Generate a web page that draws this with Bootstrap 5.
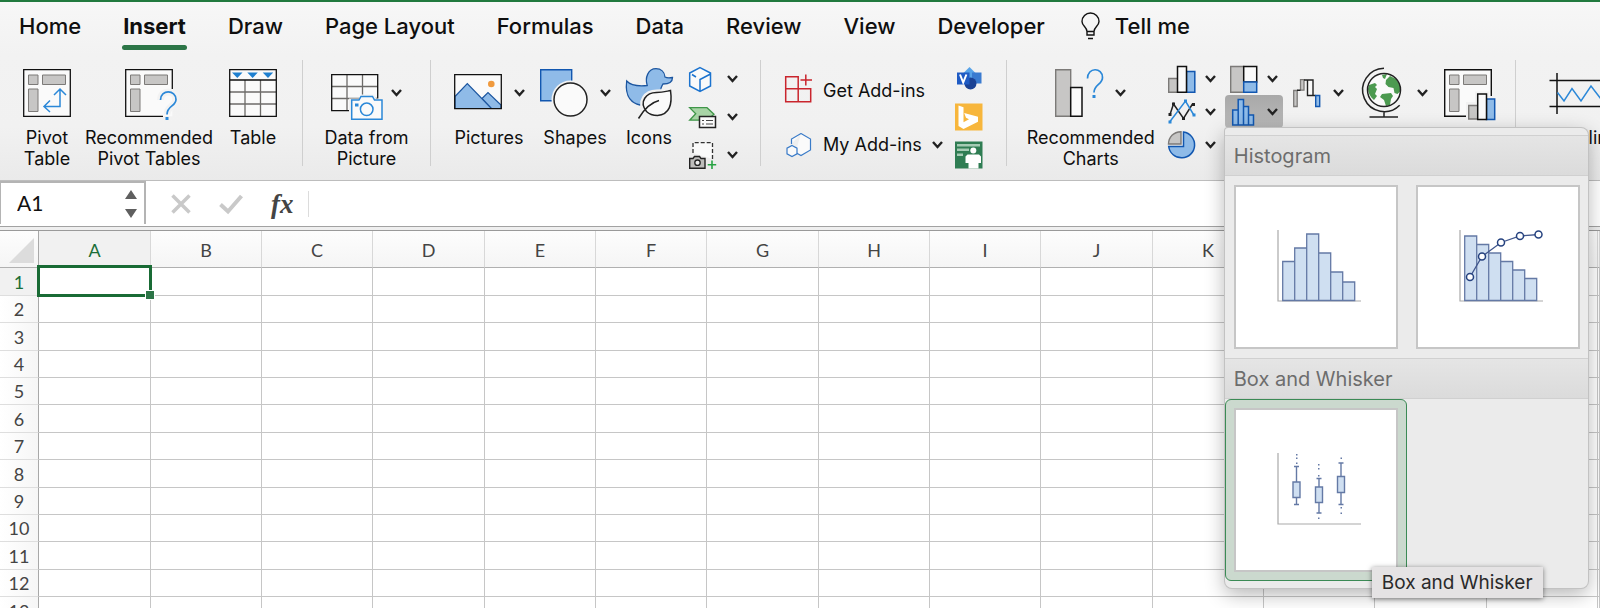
<!DOCTYPE html>
<html lang="en">
<head>
<meta charset="utf-8">
<meta name="viewport" content="width=device-width, initial-scale=1">
<title>Workbook</title>
<link href="https://cdn.jsdelivr.net/npm/bootstrap@5.3.0/dist/css/bootstrap.min.css" rel="stylesheet">
<style>
  :root { --green: #2c7547; --ink: #0f0f0f; }
  body { font-family: Inter, "Liberation Sans", sans-serif; color: var(--ink); background: #fff; }
  button, .plain { border: 0; background: none; padding: 0; color: inherit; }
  svg { overflow: visible; flex: none; display: block; fill: none; }

  .ribbon { border-top: 2px solid #217a3f; border-bottom: 1px solid #bdbdbd; background: linear-gradient(#f7f7f7, #f2f2f2 30%, #f1f1f1 70%, #eaeaea); padding-bottom: 14px; }
  .tabs { height: 58px; padding-left: 19px; gap: 42px; font-size: 22px; line-height: 24px; font-weight: 500; }
  .tabs a { color: inherit; text-decoration: none; padding: 12px 0 6px; white-space: nowrap; }
  .tabs a.active { font-weight: 700; position: relative; }
  .tabs a.active::after { content: ""; position: absolute; left: -1px; right: -1px; top: 43px; height: 5px; border-radius: 3px; background: var(--green); }
  .tabs .tell { margin-left: -6px; gap: 15px; }

  .tools { height: 106px; }
  .tool-group { border-right: 1px solid #cfcfcf; flex: none; gap: 10px; }
  .tool { font-size: 18px; line-height: 21px; flex: none; display: flex; flex-direction: column; align-items: center; align-self: flex-start; white-space: nowrap; }
  .tool .pic { height: 66px; display: flex; align-items: center; gap: 12px; margin-bottom: 1px; }
  .w-small { width: 54px; } .w-medium { width: 76px; } .w-large { width: 130px; }
  .mini { display: flex; align-items: center; justify-content: space-between; height: 33px; width: 58px; padding: 0 5px; }
  .mini.on { background: linear-gradient(#a9a9a9, #b9b9b9); border-radius: 4px; }
  .stack3 { width: 49px; }
  .stack3 button { height: 38px; display: flex; align-items: center; justify-content: space-between; width: 100%; }
  .addin { font-size: 18px; line-height: 20px; height: 54px; display: flex; align-items: center; gap: 10px; white-space: nowrap; }
  .app { height: 38px; display: flex; align-items: center; }
  .chev { stroke: #222; stroke-width: 2.4; }

  .chart-menu.dropdown-menu { display: block; top: 100%; left: 0; width: 363px; min-width: 0; padding: 7px 0; margin: 0; border: 0; border-radius: 3px 7px 7px 7px; background: #ebebeb; box-shadow: 0 0 0 1px #c2c2c2, 0 6px 20px rgba(0,0,0,.3); }
  .chart-menu h6 { font-size: 20px; line-height: 24px; font-weight: 400; color: #6d6d6d; margin: 0; padding: 8px 9px; height: 41px; border-top: 1px solid #d0d0d0; border-bottom: 1px solid #d0d0d0; background: linear-gradient(#e5e5e5, #dbdbdb); }
  .choice { padding: 8px; border: 1px solid transparent; border-radius: 6px; }
  .choice.on { background: #cbd9ce; border-color: #3b8a55; }
  .choice svg { background: #fff; outline: 2px solid #c6c6c6; outline-offset: -2px; }
  .tip { position: absolute; left: 147px; top: 439px; padding: 4px 10px; font-size: 19px; line-height: 23px; color: #2a2a2a; background: #e5e3e4; box-shadow: 0 1px 5px rgba(0,0,0,.5); white-space: nowrap; }

  .formula { height: 45px; font-family: Lato, "Liberation Sans", sans-serif; }
  .namebox { width: 146px; height: 43px; border: 2px solid #b4b4b4; border-bottom: 0; border-left-width: 1px; padding: 0 7px 0 16px; }
  .namebox input { width: 90px; font-size: 21px; line-height: 24px; border: 0; padding: 0 0 2px; background: none; color: #111; }
  .rule { height: 5px; border-top: 1px solid #a2a2a2; border-bottom: 1px solid #9a9a9a; background: #efefef; }
  .fx { font: italic 700 27px/30px "Liberation Serif", serif; color: #444; }
  .split { width: 1px; height: 26px; background: #dcdcdc; }

  .grid { table-layout: fixed; width: 100%; border-collapse: separate; border-spacing: 0; font-family: Lato, "Liberation Sans", sans-serif; font-size: 18px; line-height: 20px; color: #444; }
  .grid th { font-weight: 400; text-align: center; padding: 0; }
  .grid td { padding: 0; border-right: 1px solid #c6c6c6; border-bottom: 1px solid #c6c6c6; position: relative; }
  .grid thead th { height: 37px; width: 111px; padding-top: 2px; border-right: 1px solid #d8d8d8; border-bottom: 1px solid #b0b0b0; background: linear-gradient(#fdfdfd, #f5f5f5); }
  .grid thead th:nth-child(3n+2) { width: 112px; }
  .grid thead th:first-child { width: 39px; border-right-color: #a8a8a8; }
  .grid thead th:last-child { width: auto; }
  .grid tbody tr { height: 27px; }
  .grid tbody tr:nth-child(5n+1), .grid tbody tr:nth-child(5n+3) { height: 28px; }
  .grid tbody th { border-right: 1px solid #a8a8a8; border-bottom: 1px solid #dedede; background: linear-gradient(90deg, #fff, #f6f6f6); }
  .grid .hot { color: #1b6e38; background: #f1f1f1 !important; }
  .pick { position: absolute; inset: -3px -2px -2px -2px; border: 3px solid #196b35; z-index: 1; }
  .pick::after { content: ""; position: absolute; right: -6px; bottom: -6px; width: 10px; height: 10px; background: #2c7547; border: 1px solid #fff; }
</style>
</head>
<body class="vh-100 overflow-hidden d-flex flex-column">

<svg width="0" height="0" class="position-absolute" aria-hidden="true">
  <symbol id="chev" viewBox="0 0 11 8"><path d="M1 1l4.500 5L10 1"/></symbol>
</svg>

<header class="ribbon flex-shrink-0">
  <nav class="tabs d-flex align-items-start" aria-label="Ribbon tabs">
    <a href="#">Home</a><a href="#" class="active" aria-current="page">Insert</a><a href="#">Draw</a><a href="#">Page Layout</a><a href="#">Formulas</a><a href="#">Data</a><a href="#">Review</a><a href="#">View</a><a href="#">Developer</a>
    <a href="#" class="tell d-flex align-items-center"><svg width="19" height="24" viewBox="0 0 19 24" stroke="#111" stroke-width="1.400"><path d="M6 17.500C6 13 1 12 1 7.500a8.500 8.500 0 0 1 17 0C18 12 13 13 13 17.500zM6 17.500v3.500h7v-3.500M7 24.500h5" /></svg><span>Tell me</span></a>
  </nav>

  <div class="tools d-flex">
    <div class="tool-group d-flex" style="padding:0 20px">
      <button class="tool w-small"><span class="pic"><svg width="48" height="48"><path d="M.7.700h46.600v46.600H.700z" fill="#fafafa" stroke="#111" stroke-width="1.300"/><path d="M5.500 6h9.500v9.500H5.500zM19.500 6h23v9.500h-23zM5.500 20H15v22.500H5.500z" fill="#c7c6c5" stroke="#7c7a78"/><path d="M37 20.500v17H21.500M31 26l6-6 6 6M27 31.500l-6 6 6 5.500" stroke="#2b88d8" stroke-width="1.500"/></svg></span>Pivot<br>Table</button>
      <button class="tool w-large"><span class="pic"><svg width="48" height="48"><path d="M.700.700h46.600v46.600H.700z" fill="#fafafa"/><path d="M47.300 20V.700H.700v46.600H38" stroke="#111" stroke-width="1.300"/><path d="M5.500 6h9.500v9.500H5.500zM19.500 6h23v9.500h-23zM5.500 20H15v22.500H5.500z" fill="#c7c6c5" stroke="#7c7a78"/><path d="M35.500 31c0-11 15.500-10.500 15.500-.5 0 7-9 6-9 15" stroke="#f3f3f3" stroke-width="7"/><path d="M35.500 31c0-11 15.500-10.500 15.500-.5 0 7-9 6-9 15" stroke="#2b88d8" stroke-width="1.700"/><path d="M40.500 48h3v3h-3z" fill="#2b88d8"/></svg></span>Recommended<br>Pivot Tables</button>
      <button class="tool" style="width:58px"><span class="pic"><svg width="48" height="48"><path d="M.7.700h46.600v46.600H.700z" fill="#fafafa"/><path d="M16 11v36M31.500 11v36M1 23h46M1 35h46" stroke="#6d6b69" stroke-width="1.300"/><path d="M.7.700h46.600v46.600H.700zM1 11h46" stroke="#111" stroke-width="1.300"/><path d="M3 3.500h10.500L8.300 9zM18.300 3.500h10.500L23.600 9zM33.700 3.500h10.500L39 9z" fill="#1f80d0"/></svg></span>Table</button>
    </div>

    <div class="tool-group d-flex justify-content-center" style="width:128px">
      <button class="tool"><span class="pic gap-2"><svg width="52" height="48" viewBox="0 -5 52 48"><path d="M.7.700h46v36H.700z" fill="#fafafa"/><path d="M16 1v35M31.500 1v35M1 12.500h46M1 24.500h46" stroke="#6d6b69" stroke-width="1.300"/><path d="M.7.700h46v36H.700z" stroke="#111" stroke-width="1.300"/><path d="M18 47V24.500h10l2-4h13l2 4h9V47z" fill="#f2f2f2"/><path d="M20.700 45.300V26H28l2-3.500h11.500l2 3.500H51v19.300z" fill="#fafafa" stroke="#2b88d8" stroke-width="1.500"/><circle cx="35.700" cy="35.300" r="6.300" stroke="#2b88d8" stroke-width="1.500"/><path d="M24 29.500h3.500v3H24z" fill="#2b88d8"/></svg><svg class="chev" width="11" height="8"><use href="#chev"/></svg></span>Data from<br>Picture</button>
    </div>

    <div class="tool-group d-flex" style="padding:0 22px 0 20px">
      <button class="tool w-medium"><span class="pic"><svg width="48" height="38"><path d="M.7.700h46.600v34H.700z" fill="#fafafa"/><circle cx="37.300" cy="10" r="3.300" fill="#f09a3e"/><path d="M1 22.500L13.300 9.500 37.500 34.500H1zM28 24.500l6-6L47 31v3.500h-9.500z" fill="#8fbbe8" stroke="#1c56a0" stroke-width="1.200"/><path d="M.7.700h46.600v34H.700z" stroke="#111" stroke-width="1.300"/></svg><svg class="chev" width="11" height="8"><use href="#chev"/></svg></span>Pictures</button>
      <button class="tool w-medium"><span class="pic"><svg width="48" height="48"><path d="M.7.700h31v31H.700z" fill="#8fbbe8" stroke="#1257b0" stroke-width="1.400"/><circle cx="30.500" cy="30.500" r="19" fill="#f2f2f2"/><circle cx="30.500" cy="30.500" r="16.500" fill="#fafafa" stroke="#222" stroke-width="1.500"/></svg><svg class="chev" width="11" height="8"><use href="#chev"/></svg></span>Shapes</button>
      <button class="tool" style="width:52px"><span class="pic"><svg width="47" height="50"><path d="M.7 13c4 4.500 10 5.500 20.500 4.500-2.500-8 1-16.800 8.800-16.800 5 0 8.500 3.300 9 8.300 2.500 1.500 5 1 7.500.5 0 4-3.500 6.500-9.500 6.500-1.500 3-3 4-2 7L14 37C7 35.500-1.500 30 .7 13z" fill="#8fbbe8" stroke="#1c56a0" stroke-width="1.300"/><path d="M44.500 22.500c2 14-1 24-13 25-5 0-8-1-11-4-8-10 0-19 10-19 6 0 9-1 14-2z" fill="#fafafa" stroke="#f2f2f2" stroke-width="6"/><path d="M44.500 22.500c2 14-1 24-13 25-5 0-8-1-11-4-8-10 0-19 10-19 6 0 9-1 14-2zM12.500 50.500C17 43 23 35 33 32.500" fill="#fafafa" stroke="#222" stroke-width="1.500"/></svg></span>Icons</button>
      <div class="stack3 ms-1">
        <button aria-label="3D Models"><svg width="22" height="25"><path d="M11 .700L21.500 6v13L11 24.500.700 19V6zM11 24.500v-12L21.500 7M3 7.500l4 2.500" stroke="#1b73cf" stroke-width="1.500" fill="#fafafa"/></svg><svg class="chev" width="11" height="8"><use href="#chev"/></svg></button>
        <button aria-label="SmartArt"><svg width="27" height="21"><path d="M.7.700H18l7 6.500-7 6H.700l6-6.500z" fill="#a8d4a6" stroke="#3f9648" stroke-width="1.300"/><path d="M10.500 9.500h16v11h-16z" fill="#fafafa" stroke="#222" stroke-width="1.500"/><path d="M13 13.500h2M17 13.500h7M13 17h2M17 17h7" stroke="#444" stroke-width="1.200"/></svg><svg class="chev" width="11" height="8"><use href="#chev"/></svg></button>
        <button aria-label="Screenshot"><svg width="27" height="27"><path d="M4 11V.700h19.500V17" fill="#fafafa" stroke="#333" stroke-width="1.300" stroke-dasharray="4 2"/><path d="M.7 26.300V16.500H4l1.500-2h5l1.500 2h4v9.800z" fill="#bebdbb" stroke="#222" stroke-width="1.400"/><circle cx="8.500" cy="20.700" r="2.700" fill="#eee" stroke="#222" stroke-width="1.300"/><path d="M23 18.500v8.500M18.700 22.700h8.500" stroke="#27a343" stroke-width="1.600"/></svg><svg class="chev" width="11" height="8"><use href="#chev"/></svg></button>
      </div>
    </div>

    <div class="tool-group d-flex" style="padding:0 23px 0 24px">
      <div class="pt-1">
        <button class="addin"><svg width="28" height="34"><path d="M.7 2.700h12.500v25H.700zM.7 14.700h25v13H.7M13.200 14.700v13M20.800.500v11M15.500 6H27" stroke="#c9252d" stroke-width="1.500"/></svg>Get Add-ins</button>
        <button class="addin"><svg width="28" height="28" viewBox="-1 0 28 28"><path d="M15 2.500l9.500 5.500v11L15 24.500l-5.500-3M5.500 13V8L15 2.500" fill="#fafafa" stroke="#3a7bc8" stroke-width="1.200"/><path d="M6 14.500l5 2.700v5.600l-5 2.700-5-2.700v-5.600z" fill="#fafafa" stroke="#3a7bc8" stroke-width="1.200"/></svg>My Add-ins<svg class="chev" width="11" height="8"><use href="#chev"/></svg></button>
      </div>
      <div style="margin-left:2px">
        <button class="app" aria-label="Visio"><svg width="28" height="24"><path d="M14.500 0l8 8-8 8-8-8z" fill="#58a3e8"/><path d="M17 5.500h9.500v11H17z" fill="#3a7bd0"/><circle cx="15.500" cy="16.500" r="6" fill="#1b4294"/><path d="M2 5.500h12.500v12H2z" fill="#1f5bc4"/><path d="M5 7.500l3.200 8 3.200-8" stroke="#fff" stroke-width="2"/></svg></button>
        <button class="app" aria-label="Bing"><svg width="28" height="28"><path d="M0 .500h27.500v27H0z" fill="#f7b63c"/><path d="M3.500 2.500l5 1.700v15l5.500-3-3-1.500-1.800-4.700L23 13.700v5L8.500 26l-5-3z" fill="#fff"/></svg></button>
        <button class="app" aria-label="People Graph"><svg width="28" height="28"><path d="M0 .500h27.500v27H0z" fill="#2f7d53"/><path d="M2 3h23v2.500H2zM2 7.500h12V10H2zM2 12.500h6V15H2z" fill="#a5cbb4"/><circle cx="18.300" cy="9.500" r="3" fill="#fff"/><path d="M10.500 15.500l2-2h11.500l2 2V22h-2.500v5.500h-10V22h-3z" fill="#fff"/></svg></button>
      </div>
    </div>

    <div class="tool-group d-flex" style="padding:0 20px;gap:8px">
      <button class="tool" style="width:128px"><span class="pic"><svg width="48" height="48"><path d="M.7.700h15v46.600h-15z" fill="#c7c6c5" stroke="#7c7a78" stroke-width="1.400"/><path d="M15.700 18.500H27v28.800H15.700z" fill="#fafafa" stroke="#111" stroke-width="1.500"/><path d="M32.500 9.500C32.500-2 47.500-2 47.500 8.500c0 7-8.500 7-8.500 15" stroke="#2b88d8" stroke-width="1.700"/><path d="M37.500 26h3v3h-3z" fill="#2b88d8"/></svg><svg class="chev" width="11" height="8"><use href="#chev"/></svg></span>Recommended<br>Charts</button>
      <div class="d-grid align-content-start" style="grid-template-columns:58px 58px;column-gap:4px;padding-top:2px">
        <button class="mini" aria-label="Column chart"><svg width="28" height="28"><path d="M.7 13.500h9v13.800h-9z" fill="#c7c6c5" stroke="#7c7a78" stroke-width="1.400"/><path d="M18.500 6.500h8.300v20.800h-8.300z" fill="#8fbbe8" stroke="#1257b0" stroke-width="1.500"/><path d="M9.500 1.500h9v25.800h-9z" fill="#fafafa" stroke="#111" stroke-width="1.500"/></svg><svg class="chev" width="11" height="8"><use href="#chev"/></svg></button>
        <button class="mini" aria-label="Hierarchy chart"><svg width="28" height="28"><path d="M.7 1.500h13v25.800h-13z" fill="#c7c6c5" stroke="#7c7a78" stroke-width="1.400"/><path d="M13.700 1.500h13v15.500h-13z" fill="#fafafa" stroke="#111" stroke-width="1.500"/><path d="M13.700 17h13v10.300h-13z" fill="#8fbbe8" stroke="#1257b0" stroke-width="1.500"/></svg><svg class="chev" width="11" height="8"><use href="#chev"/></svg></button>
        <button class="mini" aria-label="Line chart"><svg width="28" height="28"><path d="M2 16.500L5.500 6 15.500 20.500l9-14.500" stroke="#222" stroke-width="1.500"/><path d="M2 23.500L17.500 3l8 13.500" stroke="#2b88d8" stroke-width="1.500"/><path d="M.5 15h3v3h-3zM4 4.500h3v3H4zM14 19h3v3h-3zM24 5h3v3h-3z" fill="#222"/><path d="M.5 22.500h3v3h-3zM16 1.500h3v3h-3zM24.500 15.500h3v3h-3z" fill="#2b88d8"/></svg><svg class="chev" width="11" height="8"><use href="#chev"/></svg></button>
        <div class="dropdown">
          <button class="mini on" aria-label="Statistical chart" aria-expanded="true"><svg width="28" height="28"><path d="M2.700 12h5.500v15H2.700zM13.500 8.500h5v18.500h-5zM18.500 17h5v10h-5zM8.200 1.500h5.300V27H8.200z" fill="#8fbbe8" stroke="#1257b0" stroke-width="1.500"/></svg><svg class="chev" width="11" height="8"><use href="#chev"/></svg></button>
          <div class="dropdown-menu chart-menu show">
            <h6>Histogram</h6>
            <div class="d-flex justify-content-between">
              <button class="choice" aria-label="Histogram"><svg width="164" height="164"><path d="M44 45v71h83" stroke="#a9a9a9" stroke-width="1.200"/><path d="M48.700 76.500h12v39h-12zM60.700 63h12v52.500h-12zM72.700 49h12v66.500h-12zM84.700 68h12v47.500h-12zM96.700 87h12v28.500h-12zM108.700 97h12v18.500h-12z" fill="#cfdff1" stroke="#6479a5" stroke-width="1.300"/></svg></button>
              <button class="choice" aria-label="Pareto"><svg width="164" height="164"><path d="M44 45v71h83" stroke="#a9a9a9" stroke-width="1.200"/><path d="M48.700 51h12v64.500h-12zM60.700 59.500h12v56h-12zM72.700 68h12v47.500h-12zM84.700 76.500h12v39h-12zM96.700 85h12v30.500h-12zM108.700 93.500h12v22h-12z" fill="#cfdff1" stroke="#6479a5" stroke-width="1.300"/><path d="M54 92l12-20.500L85 57.500l19-6.500 19-1.500" stroke="#40568c" stroke-width="1.300"/><g fill="#fff" stroke="#25427f" stroke-width="1.500"><circle cx="54" cy="92" r="3.500"/><circle cx="66" cy="71.500" r="3.500"/><circle cx="85" cy="57.500" r="3.500"/><circle cx="104" cy="51" r="3.500"/><circle cx="122.500" cy="49.500" r="3.500"/></g></svg></button>
            </div>
            <h6>Box and Whisker</h6>
            <button class="choice on" aria-label="Box and Whisker" aria-describedby="tip"><svg width="164" height="164"><path d="M44 45v71h83" stroke="#a9a9a9" stroke-width="1.200"/><g stroke="#6479a5" stroke-width="1.400" fill="#cfdff1"><path d="M62.500 58.500v38M60 58.500h5M60 96.500h5M85 70.500v34.500M82.500 70.500h5M82.500 105h5M107 55v41.500M104.500 55h5M104.500 96.500h5"/><path d="M59 74h7v15.500h-7zM81.500 79h7v15.500h-7zM103.500 68.500h7V84.500h-7z"/></g><path d="M62 46h1.500v1.500H62zM62 49.500h1.500V51H62zM62 54.500h1.500V56H62zM84 56h1.500v1.500H84zM84 60h1.500v1.500H84zM84 67h1.500v1.500H84zM84 109.500h1.500v1.500H84zM106.500 49.500h1.500V51h-1.500zM106.500 99h1.500v1.500h-1.500zM106.500 104.500h1.500v1.500h-1.500z" fill="#6479a5"/></svg></button>
            <div class="tip" id="tip" role="tooltip">Box and Whisker</div>
          </div>
        </div>
        <button class="mini" aria-label="Pie chart"><svg width="28" height="28"><path d="M15.500 1v14.500H.7A13 13 0 1 0 15.500 1z" fill="#8fbbe8" stroke="#1257b0" stroke-width="1.500"/><path d="M13 .700V13H.500C.700 6 5.500 1 13 .700z" fill="#c7c6c5" stroke="#7c7a78" stroke-width="1.400"/></svg><svg class="chev" width="11" height="8"><use href="#chev"/></svg></button>
      </div>
      <button class="tool" style="margin-left:2px" aria-label="Waterfall chart"><span class="pic"><svg width="28" height="28"><path d="M.7 11.500h3.500v16H.7zM7.500.700h3.500v10.500H7.500z" fill="#c7c6c5" stroke="#7c7a78" stroke-width="1.300"/><path d="M14.500.700h5.500v15.500h-5.500z" fill="#fafafa"/><path d="M4 11.200h3.500M11 1h9v15.500M14.500 1v15.500h8" stroke="#222" stroke-width="1.400"/><path d="M22.700 16.500h4v11h-4z" fill="#8fbbe8" stroke="#1257b0" stroke-width="1.400"/></svg><svg class="chev" width="11" height="8"><use href="#chev"/></svg></span></button>
      <button class="tool ms-2" aria-label="Maps"><span class="pic"><svg width="45" height="52" viewBox="-2 0 45 52"><circle cx="22" cy="23" r="16.500" fill="#fafafa"/><path d="M7 18l6-2 2 2-2 2 2 2-2 5 2 2-3 4C8 30 6 25 6 22zM20 27l9-1 2 3-2 3-1 6-4 1-2-6-4-3zM24 13l4-4 6 3 4 6 .5 6-3 3-3-1-1-5-5-1-3-3zM20 8l5-1-2 5-2-1z" fill="#4c9a50"/><circle cx="22" cy="23" r="16.500" stroke="#222" stroke-width="1.500"/><path d="M22 1.200a21.700 21.700 0 1 0 15.700 37M22 44.700V50M7.500 50H36" stroke="#222" stroke-width="1.500"/></svg><svg class="chev" width="11" height="8"><use href="#chev"/></svg></span></button>
      <button class="tool ms-2" aria-label="PivotChart"><span class="pic"><svg width="51" height="48"><path d="M47.300 27V.700H.700v46.600H22" fill="#fafafa" stroke="#111" stroke-width="1.400"/><path d="M5.500 6h9.500v9.500H5.500zM19.500 6h23v9.500h-23zM5.500 20H15v22.500H5.500z" fill="#c7c6c5" stroke="#7c7a78"/><path d="M22 33h9V22.500h14V27h8v25H22z" fill="#f2f2f2"/><path d="M24.700 36.500h9V50h-9z" fill="#c7c6c5" stroke="#7c7a78" stroke-width="1.400"/><path d="M42.500 30h8.200v20.500h-8.200z" fill="#8fbbe8" stroke="#1257b0" stroke-width="1.500"/><path d="M33.700 25h8.800v25.500h-8.800z" fill="#fafafa" stroke="#111" stroke-width="1.500"/></svg></span></button>
    </div>

    <div class="d-flex" style="padding-left:23px">
      <button class="tool"><span class="pic"><svg width="68" height="42"><path d="M.5 8.500H70M.5 34.500H70M8 1v41" stroke="#111" stroke-width="1.500"/><path d="M8.500 20.500L15 29l8-12.500 9 12.500 10-15 10 13 8-10" stroke="#2b88d8" stroke-width="1.500"/></svg></span>Sparklines</button>
    </div>
  </div>
</header>

<section class="formula d-flex flex-shrink-0" aria-label="Formula bar">
  <div class="namebox d-flex align-items-center justify-content-between">
    <input aria-label="Name box" value="A1">
    <svg width="12" height="28"><path d="M6 0l6 9H0zM6 28l6-9H0z" fill="#5f5f5f"/></svg>
  </div>
  <div class="d-flex align-items-center" style="padding-left:25px">
    <button aria-label="Cancel"><svg width="20" height="20" stroke="#c9c9c9" stroke-width="3.500"><path d="M1.500 1.500l17 17M18.500 1.500l-17 17"/></svg></button>
    <button aria-label="Enter" style="margin:0 28px"><svg width="24" height="20" stroke="#c9c9c9" stroke-width="4"><path d="M1.500 10.500L9 17.500 22.500 2"/></svg></button>
    <button class="fx" aria-label="Insert function">fx</button>
    <span class="split" style="margin-left:14px"></span>
  </div>
  <input class="plain flex-fill ms-2" aria-label="Formula">
</section>
<div class="rule flex-shrink-0"></div>

<main class="flex-fill overflow-hidden">
  <table class="grid">
    <thead><tr id="cols"><th aria-label="Select all"><svg width="25" height="25" style="margin-left:9px"><path d="M25 0v25H0z" fill="#dcdcdc"/></svg></th></tr></thead>
    <tbody id="rows"></tbody>
  </table>
</main>

<script src="https://cdn.jsdelivr.net/npm/bootstrap@5.3.0/dist/js/bootstrap.bundle.min.js"></script>
<script>
  const letters = [..."ABCDEFGHIJKLMN", ""];
  document.getElementById("cols").insertAdjacentHTML("beforeend",
    letters.map((c, i) => `<th scope="col"${i ? "" : ' class="hot"'}>${c}</th>`).join(""));
  document.getElementById("rows").innerHTML = Array.from({ length: 13 }, (_, r) =>
    `<tr><th scope="row"${r ? "" : ' class="hot"'}>${r + 1}</th>` +
    letters.map((c, i) => `<td>${r || i ? "" : '<div class="pick"></div>'}</td>`).join("") + "</tr>").join("");
</script>
</body>
</html>
